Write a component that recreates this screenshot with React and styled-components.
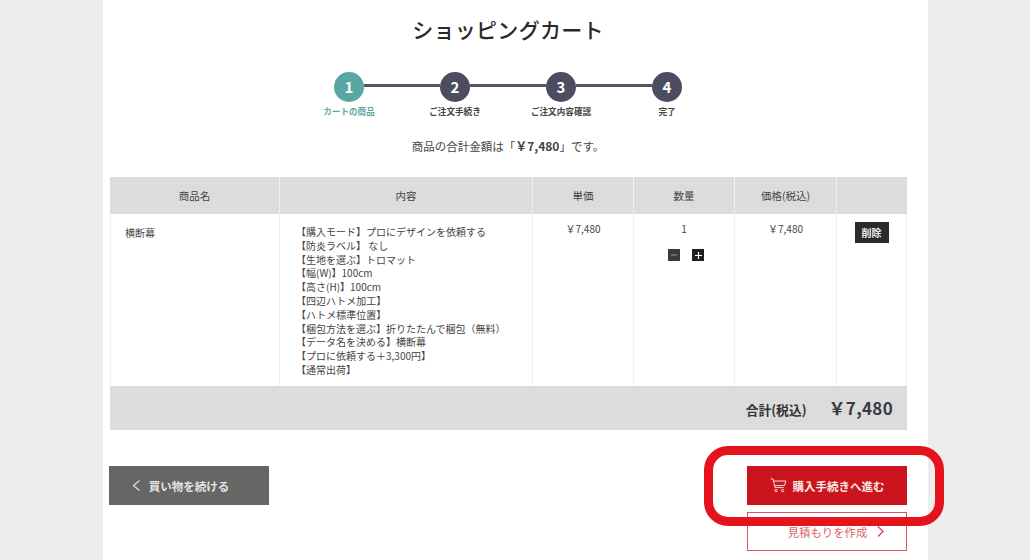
import React from "react";
import styled, { createGlobalStyle } from "styled-components";

const GlobalStyle = createGlobalStyle`
  html, body {
    margin: 0;
    height: 560px;
    overflow: hidden;
    background: #ededeb;
    font-family: "Noto Sans CJK JP", "Noto Sans", sans-serif;
    color: #333;
  }
`;

const steps = ["カートの商品", "ご注文手続き", "ご注文内容確認", "完了"];
const columns = [169, 253, 101, 101, 102, 71];
const details = [
  "【購入モード】プロにデザインを依頼する",
  "【防炎ラベル】 なし",
  "【生地を選ぶ】トロマット",
  "【幅(W)】100cm",
  "【高さ(H)】100cm",
  "【四辺ハトメ加工】",
  "【ハトメ標準位置】",
  "【梱包方法を選ぶ】折りたたんで梱包（無料）",
  "【データ名を決める】横断幕",
  "【プロに依頼する＋3,300円】",
  "【通常出荷】",
];

function App() {
  return (
    <>
      <GlobalStyle />
      <Page>
        <Main>
          <Title>ショッピングカート</Title>
          <Stepper>
            <CircleRow>
              {steps.map((step, i) => (
                <React.Fragment key={step}>
                  {i > 0 && <StepLine />}
                  <Circle $active={i === 0}>{i + 1}</Circle>
                </React.Fragment>
              ))}
            </CircleRow>
            <LabelRow>
              {steps.map((step, i) => (
                <StepLabel key={step} $active={i === 0}>
                  {step}
                </StepLabel>
              ))}
            </LabelRow>
          </Stepper>
          <Summary>
            商品の合計金額は「<b>￥7,480</b>」です。
          </Summary>
          <CartTable>
            <colgroup>
              {columns.map((w, i) => (
                <col key={i} width={w} />
              ))}
            </colgroup>
            <thead>
              <tr>
                <Th>商品名</Th>
                <Th>内容</Th>
                <Th>単価</Th>
                <Th>数量</Th>
                <Th>価格(税込)</Th>
                <Th />
              </tr>
            </thead>
            <tbody>
              <tr>
                <NameCell>横断幕</NameCell>
                <DetailCell>
                  {details.map((line) => (
                    <div key={line}>{line}</div>
                  ))}
                </DetailCell>
                <PriceCell>￥7,480</PriceCell>
                <PriceCell>
                  1
                  <QtyButtons>
                    <QtyButton $muted>
                      <svg width="6" height="6" viewBox="0 0 6 6">
                        <path d="M0 3h6" stroke="#999" strokeWidth="1" />
                      </svg>
                    </QtyButton>
                    <QtyButton>
                      <svg width="7" height="7" viewBox="0 0 7 7">
                        <path d="M0 3.5h7M3.5 0v7" stroke="#fff" strokeWidth="1.2" />
                      </svg>
                    </QtyButton>
                  </QtyButtons>
                </PriceCell>
                <PriceCell>￥7,480</PriceCell>
                <PriceCell>
                  <DeleteButton>削除</DeleteButton>
                </PriceCell>
              </tr>
            </tbody>
            <tfoot>
              <tr>
                <TotalCell colSpan={6}>
                  <TotalLabel>合計(税込)</TotalLabel>
                  <TotalValue>￥7,480</TotalValue>
                </TotalCell>
              </tr>
            </tfoot>
          </CartTable>
          <Actions>
            <BackButton>
              <svg width="9" height="13" viewBox="0 0 9 13" fill="none">
                <path d="M7.5 1.5 1.5 6.5l6 5" stroke="#ddd" strokeWidth="1.3" />
              </svg>
              買い物を続ける
            </BackButton>
            <RightActions>
              <CheckoutButton>
                <svg width="17" height="15" viewBox="0 0 17 15" fill="none" stroke="#f6dede" strokeWidth="1">
                  <path d="M0.5 1h2.6l1.9 8.6h8.6" />
                  <path d="M3.5 3h12.4l-1.5 4.6H4.5" />
                  <circle cx="6" cy="12.6" r="1.2" />
                  <circle cx="12.6" cy="12.6" r="1.2" />
                </svg>
                購入手続きへ進む
              </CheckoutButton>
              <QuoteButton>
                見積もりを作成
                <svg width="9" height="13" viewBox="0 0 9 13" fill="none">
                  <path d="M2 1.5l5 5-5 5" stroke="#d9454c" strokeWidth="1.3" />
                </svg>
              </QuoteButton>
              <Highlight />
            </RightActions>
          </Actions>
        </Main>
      </Page>
    </>
  );
}

const Page = styled.div`
  padding: 0 102px 0 103px;
`;

const Main = styled.main`
  background: #fff;
  height: 560px;
  padding: 0 21px 0 6px;
  box-sizing: border-box;
`;

const Title = styled.h1`
  margin: 0;
  padding-top: 13px;
  height: 58px;
  box-sizing: border-box;
  font-size: 21px;
  line-height: 32px;
  font-weight: 500;
  letter-spacing: 0.3px;
  color: #2a2a2a;
  text-align: center;
`;

const Stepper = styled.div`
  margin-top: 14px;
  display: flex;
  flex-direction: column;
  align-items: center;
`;

const CircleRow = styled.div`
  width: 348px;
  display: flex;
  align-items: center;
`;

const Circle = styled.div`
  flex: none;
  width: 30px;
  height: 30px;
  border-radius: 50%;
  background: ${(p) => (p.$active ? "#58a7a3" : "#4d4d61")};
  color: #fff;
  font-size: 15px;
  font-weight: 700;
  line-height: 30px;
  text-align: center;
`;

const StepLine = styled.div`
  flex: 1;
  height: 3px;
  margin-top: -3px;
  background: #55556a;
`;

const LabelRow = styled.div`
  margin-top: 2px;
  display: grid;
  grid-template-columns: repeat(4, 106px);
`;

const StepLabel = styled.div`
  font-size: 8.6px;
  line-height: 15px;
  font-weight: 700;
  text-align: center;
  white-space: nowrap;
  color: ${(p) => (p.$active ? "#5ea8a5" : "#444")};
`;

const Summary = styled.p`
  margin: 18px 0 0;
  font-size: 11.5px;
  line-height: 18px;
  color: #444;
  text-align: center;

  b {
    font-weight: 700;
    font-size: 12px;
  }
`;

const CartTable = styled.table`
  margin: 22px 0 0 1px;
  width: 797px;
  table-layout: fixed;
  border-collapse: separate;
  border-spacing: 0;
  font-size: 10px;
  color: #444;
`;

const Th = styled.th`
  height: 37px;
  box-sizing: border-box;
  padding: 0;
  background: #dcdcdc;
  border-left: 1px solid #f0f0f0;
  font-size: 10.5px;
  font-weight: 400;
  color: #444;

  &:first-child {
    border-left: 0;
  }
`;

const Td = styled.td`
  height: 172px;
  box-sizing: border-box;
  vertical-align: top;
  border-left: 1px solid #eee;

  &:last-child {
    border-right: 1px solid #eee;
  }
`;

const NameCell = styled(Td)`
  padding: 11px 0 0 14px;
  line-height: 15px;
`;

const DetailCell = styled(Td)`
  padding: 11px 0 0 16px;
  line-height: 13.8px;
  white-space: nowrap;
`;

const PriceCell = styled(Td)`
  padding-top: 7px;
  line-height: 15px;
  text-align: center;
`;

const QtyButtons = styled.div`
  margin-top: 13px;
  padding-left: 4px;
  display: flex;
  justify-content: center;
  gap: 12px;
`;

const QtyButton = styled.span`
  width: 12px;
  height: 12px;
  display: flex;
  align-items: center;
  justify-content: center;
  background: ${(p) => (p.$muted ? "#3a3a3a" : "#1e1e1e")};
`;

const DeleteButton = styled.span`
  display: block;
  width: 34px;
  height: 21px;
  margin: 1px auto 0;
  background: #2b2b2b;
  color: #eee;
  font-size: 10px;
  font-weight: 700;
  line-height: 21px;
`;

const TotalCell = styled.td`
  height: 44px;
  box-sizing: border-box;
  padding: 0 14px 2px 0;
  background: #dcdcdc;
  text-align: right;
  vertical-align: middle;
`;

const TotalLabel = styled.span`
  font-size: 12.8px;
  font-weight: 700;
  color: #333;
`;

const TotalValue = styled.span`
  margin-left: 22px;
  font-size: 17px;
  font-weight: 700;
  letter-spacing: 0.3px;
  color: #3a3a44;
`;

const Actions = styled.div`
  margin-top: 36px;
  display: flex;
  justify-content: space-between;
  align-items: flex-start;
`;

const Button = styled.div`
  width: 160px;
  height: 39px;
  box-sizing: border-box;
  display: flex;
  align-items: center;
  justify-content: center;
  font-size: 11.5px;
  font-weight: 700;
`;

const BackButton = styled(Button)`
  gap: 8px;
  padding-right: 17px;
  background: #666665;
  color: #e4e4e4;
`;

const RightActions = styled.div`
  position: relative;
  display: flex;
  flex-direction: column;
  gap: 7px;
`;

const CheckoutButton = styled(Button)`
  gap: 6px;
  background: #cb141b;
  color: #fbeaea;
`;

const QuoteButton = styled(Button)`
  gap: 9px;
  padding-left: 19px;
  border: 1px solid #e2525a;
  background: #fff;
  color: #d9656b;
  font-size: 11.4px;
  font-weight: 400;
`;

const Highlight = styled.div`
  position: absolute;
  left: -43px;
  top: -20px;
  width: 240px;
  height: 80px;
  box-sizing: border-box;
  border: 9px solid #e5141c;
  border-radius: 24px;
`;

export default App;
